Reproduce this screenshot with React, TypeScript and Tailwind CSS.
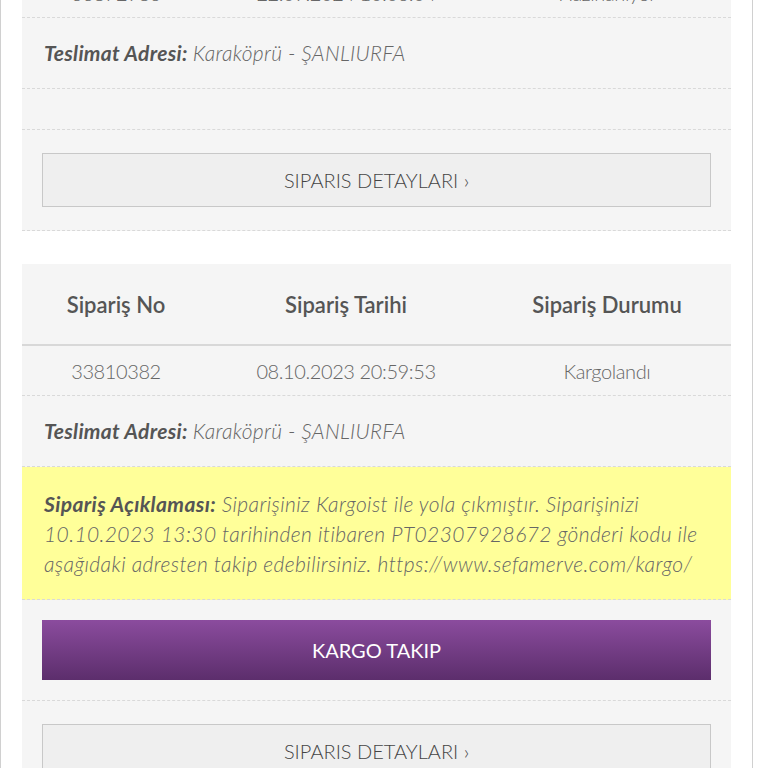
import React from "react";

const font = {
  fontFamily: 'Lato, "Open Sans", sans-serif',
};

type Order = {
  no: string;
  date: string;
  status: string;
  address: string;
  note?: React.ReactNode;
};

function OrderCard({ order, empty }: { order: Order; empty?: boolean }) {
  return (
    <div className="bg-[#f5f5f5] border-b border-dashed border-[#d9d9d9]">
      <div className="grid grid-cols-[188px_272px_250px] h-[82px] items-center text-[22px] font-semibold text-[#555] border-b-2 border-[#d8d8d8]">
        <div className="text-center">Sipariş No</div>
        <div className="text-center">Sipariş Tarihi</div>
        <div className="text-center">Sipariş Durumu</div>
      </div>
      <div className="grid grid-cols-[188px_272px_250px] h-[50px] items-center text-[20px] tracking-[-0.4px] font-light text-[#666] border-b border-dashed border-[#d9d9d9]">
        <div className="text-center">{order.no}</div>
        <div className="text-center">{order.date}</div>
        <div className="text-center">{order.status}</div>
      </div>
      <div className="h-[71px] flex items-center px-[22px] text-[21px] tracking-[0.3px] text-[#666] italic border-b border-dashed border-[#d9d9d9]">
        <span className="font-bold text-[#555]">Teslimat Adresi:</span>
        <span className="ml-[5px] font-light">{order.address}</span>
      </div>
      {empty && <div className="h-[41px] border-b border-dashed border-[#d9d9d9]" />}
      {order.note && (
        <>
          <div className="bg-[#ffff99] px-[22px] pt-[22px] pb-[20px] text-[21px] tracking-[0.4px] leading-[30px] italic font-light text-[#666] border-b border-dashed border-[#d9d9d9] whitespace-nowrap">
            <span className="font-bold text-[#555]">Sipariş Açıklaması:</span> {order.note}
          </div>
          <div className="px-[20px] py-[20px] border-b border-dashed border-[#d9d9d9]">
            <button className="w-full h-[60px] bg-gradient-to-b from-[#8b4c9e] to-[#5c2e6c] text-white text-[20px] font-normal">
              KARGO TAKIP
            </button>
          </div>
        </>
      )}
      <div className="px-[20px] py-[23px]">
        <button className="w-full h-[54px] bg-[#efefef] border border-[#c8c8c8] text-[#444] text-[20px] font-light">
          SIPARIS DETAYLARI ›
        </button>
      </div>
    </div>
  );
}

export default function App() {
  const orders: Order[] = [
    {
      no: "33872986",
      date: "22.09.2024 10:06:04",
      status: "Hazırlanıyor",
      address: "Karaköprü - ŞANLIURFA",
    },
    {
      no: "33810382",
      date: "08.10.2023 20:59:53",
      status: "Kargolandı",
      address: "Karaköprü - ŞANLIURFA",
      note: (
        <>
          Siparişiniz Kargoist ile yola çıkmıştır. Siparişinizi
          <br />
          10.10.2023 13:30 tarihinden itibaren PT02307928672 gönderi kodu ile
          <br />
          aşağıdaki adresten takip edebilirsiniz. https://www.sefamerve.com/kargo/
        </>
      ),
    },
  ];

  return (
    <div className="min-h-screen bg-white overflow-hidden" style={font}>
      <div className="w-[753px] min-h-screen border-x border-[#d0d0d0] px-[21px] -mt-[114px] flex flex-col gap-[33px] pb-10">
        <OrderCard order={orders[0]} empty />
        <OrderCard order={orders[1]} />
      </div>
    </div>
  );
}
